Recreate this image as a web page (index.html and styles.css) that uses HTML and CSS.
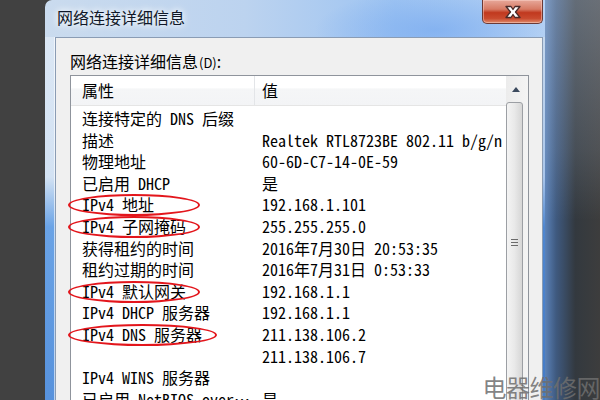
FILE: index.html
```html
<!DOCTYPE html>
<html lang="zh-CN">
<head>
  <meta charset="UTF-8">
  <title>网络连接详细信息</title>
  <link rel="stylesheet" href="styles.css">
</head>
<body>

  <div class="desk-left"></div>

  <div class="window">
    <div class="titlebar">
      <span class="title">网络连接详细信息</span>
      <button class="close-btn">
        <svg width="20" height="14" viewBox="0 0 20 14">
          <path d="M3 1.5h5l2 3 2-3h5l-4.5 5.5 4.5 5.5h-5l-2-3-2 3H3l4.5-5.5z" fill="#fff" stroke="#4a2a28" stroke-width="1.3" stroke-linejoin="round"/>
        </svg>
      </button>
    </div>

    <div class="frame">
      <div class="frame-side"></div>

      <div class="client">
        <div class="caption">网络连接详细信息<span class="akey">(D)</span>:</div>

        <div class="listbox">
          <div class="list-main">
            <div class="list-head">
              <div class="head-cell">属性</div>
              <div class="head-cell value">值</div>
            </div>
            <div class="list-rows" id="rows"></div>
          </div>

          <div class="scrollbar">
            <div class="scroll-up">
              <svg width="8" height="5" viewBox="0 0 8 5"><path d="M0 5L4 0l4 5z" fill="#3c4a5e"/></svg>
            </div>
            <div class="scroll-thumb">
              <svg width="9" height="9" viewBox="0 0 9 9">
                <path d="M1 1.5h7M1 4.5h7M1 7.5h7" stroke="#6b6b6b" stroke-width="1.2"/>
              </svg>
            </div>
          </div>
        </div>
      </div>

      <div class="frame-edge"></div>
    </div>
  </div>

  <div class="desk-right"></div>

  <div class="watermark">电器维修网</div>

  <script>
    // property / value pairs; "mark" rows get a red ring drawn round the label
    const details = [
      ['连接特定的 DNS 后缀', ''],
      ['描述', 'Realtek RTL8723BE 802.11 b/g/n Wireless LAN 802.11n PCI-E NIC'],
      ['物理地址', '60-6D-C7-14-0E-59'],
      ['已启用 DHCP', '是'],
      ['IPv4 地址', '192.168.1.101', 'mark'],
      ['IPv4 子网掩码', '255.255.255.0', 'mark'],
      ['获得租约的时间', '2016年7月30日 20:53:35'],
      ['租约过期的时间', '2016年7月31日 0:53:33'],
      ['IPv4 默认网关', '192.168.1.1', 'mark'],
      ['IPv4 DHCP 服务器', '192.168.1.1'],
      ['IPv4 DNS 服务器', '211.138.106.2', 'mark wide'],
      ['', '211.138.106.7'],
      ['IPv4 WINS 服务器', ''],
      ['已启用 NetBIOS over Tcpip', '是']
    ];

    const rows = document.getElementById('rows');

    details.forEach(([name, value, mark]) => {
      const row = document.createElement('div');
      row.className = 'row';

      const prop = document.createElement('div');
      prop.className = 'cell prop';
      prop.textContent = name;

      const val = document.createElement('div');
      val.className = 'cell val';
      val.textContent = value;

      row.appendChild(prop);
      row.appendChild(val);

      if (mark) {
        const ring = document.createElement('span');
        ring.className = mark;
        row.appendChild(ring);
      }

      rows.appendChild(row);
    });
  </script>
</body>
</html>
```

FILE: styles.css
```css
body {
  margin: 0;
  width: 600px;
  height: 400px;
  overflow: hidden;
  display: flex;
  position: relative;
  background-color: #404040;
  font-family: "Noto Sans CJK SC", sans-serif;
  color: #000;
}

.desk-left {
  width: 45px;
  flex-shrink: 0;
  background-color: #414141;
}

.desk-right {
  flex: 1;
  background:
    linear-gradient(to bottom, rgba(190, 205, 225, 0.35) 0, rgba(190, 205, 225, 0.15) 150px, rgba(0, 0, 0, 0) 220px),
    linear-gradient(to right, #5b82b8 0, #3f5a80 20%, #33393f 55%, #3d3d3d 100%);
}

.window {
  width: 500px;
  flex-shrink: 0;
  display: flex;
  flex-direction: column;
  border-top-left-radius: 7px;
  overflow: hidden;
}

.titlebar {
  height: 37px;
  flex-shrink: 0;
  display: flex;
  justify-content: space-between;
  background:
    radial-gradient(ellipse 120px 40px at 390px 30px, rgba(120, 170, 240, 0.7), rgba(120, 170, 240, 0) 100%),
    linear-gradient(to right, #cadbee 0, #bcd3ef 40%, #9ec4f2 70%, #b6d2f4 100%);
}

.title {
  padding: 6px 0 0 12px;
  font-size: 16px;
  line-height: 22px;
  color: #101828;
  text-shadow: 0 0 6px #fff, 0 0 10px rgba(255, 255, 255, 0.9);
}

.close-btn {
  width: 61px;
  height: 24px;
  margin-right: 2px;
  padding: 0;
  display: flex;
  align-items: center;
  justify-content: center;
  border: 1px solid #6b3a36;
  border-top: none;
  border-radius: 0 0 5px 5px;
  background: linear-gradient(to bottom, #e7a89a 0, #d77a64 40%, #c1391f 55%, #c94a2e 80%, #df8b6b 100%);
  box-shadow: inset 0 0 0 1px rgba(255, 220, 210, 0.45);
}

.frame {
  flex: 1;
  display: flex;
}

.frame-side {
  width: 10px;
  background: linear-gradient(to bottom, #dbe7f4 0, #d3e2f3 140px, #6aa3e6 190px, #4e8ad8 100%);
  box-shadow: inset -1px 0 0 rgba(255, 255, 255, 0.6);
}

.frame-edge {
  width: 2px;
  background: linear-gradient(to bottom, #c5d8ee 0, #aac6ea 140px, #4f87d0 190px, #3f76c2 100%);
}

.client {
  flex: 1;
  padding: 13px 0 0 14px;
  background-color: #f0f0f0;
  border: 1px solid #8a9cb4;
  border-bottom: none;
}

.caption {
  font-size: 16px;
  line-height: 20px;
  margin-bottom: 2px;
}

.akey {
  font-size: 13px;
  margin-left: 1px;
}

.listbox {
  width: 457px;
  height: 400px;
  display: flex;
  background-color: #fff;
  border: 1px solid #8f949c;
}

.list-main {
  width: 435px;
}

.list-head {
  height: 29px;
  display: flex;
  background: linear-gradient(to bottom, #fff 0, #fff 40%, #f5f6f7 45%, #f3f4f6 100%);
  border-bottom: 1px solid #e5e5e5;
}

.head-cell {
  width: 172px;
  padding-left: 11px;
  font-size: 16px;
  line-height: 28px;
  border-right: 1px solid #e3e5e8;
}

.head-cell.value {
  flex: 1;
  padding-left: 7px;
  border-right: none;
}

.list-rows {
  padding-top: 2px;
}

.row {
  display: flex;
  position: relative;
  height: 21.6px;
  font-family: "Noto Sans Mono CJK SC", "Noto Sans CJK SC", monospace;
  font-size: 16px;
  line-height: 21.6px;
}

.cell {
  white-space: pre;
  overflow: hidden;
}

.cell.prop {
  width: 172px;
  flex-shrink: 0;
  padding: 0 8px 0 11px;
  text-overflow: ellipsis;
}

.cell.val {
  flex: 1;
  min-width: 0;
}

/* hand-drawn red ring over a marked label */
.mark {
  position: absolute;
  left: -3px;
  top: 0;
  width: 128px;
  height: 18px;
  border: 2px solid #e3161c;
  border-radius: 50%;
}

.mark.wide {
  width: 145px;
}

.scrollbar {
  width: 22px;
  display: flex;
  flex-direction: column;
  background: linear-gradient(to right, #ececec, #f4f4f4);
}

.scroll-up {
  height: 26px;
  display: flex;
  align-items: center;
  justify-content: center;
  padding-right: 2px;
}

.scroll-thumb {
  flex: 1;
  width: 17px;
  margin-right: 3px;
  display: flex;
  justify-content: center;
  padding-top: 135px;
  box-sizing: border-box;
  border: 1px solid #9c9fa4;
  border-radius: 3px;
  background: linear-gradient(to right, #f4f4f4 0, #e9e9e9 50%, #d6d6d6 100%);
}

.watermark {
  position: absolute;
  right: 0;
  top: 372px;
  font-size: 24px;
  line-height: 30px;
  letter-spacing: -0.5px;
  color: rgba(110, 110, 110, 0.85);
}
```
